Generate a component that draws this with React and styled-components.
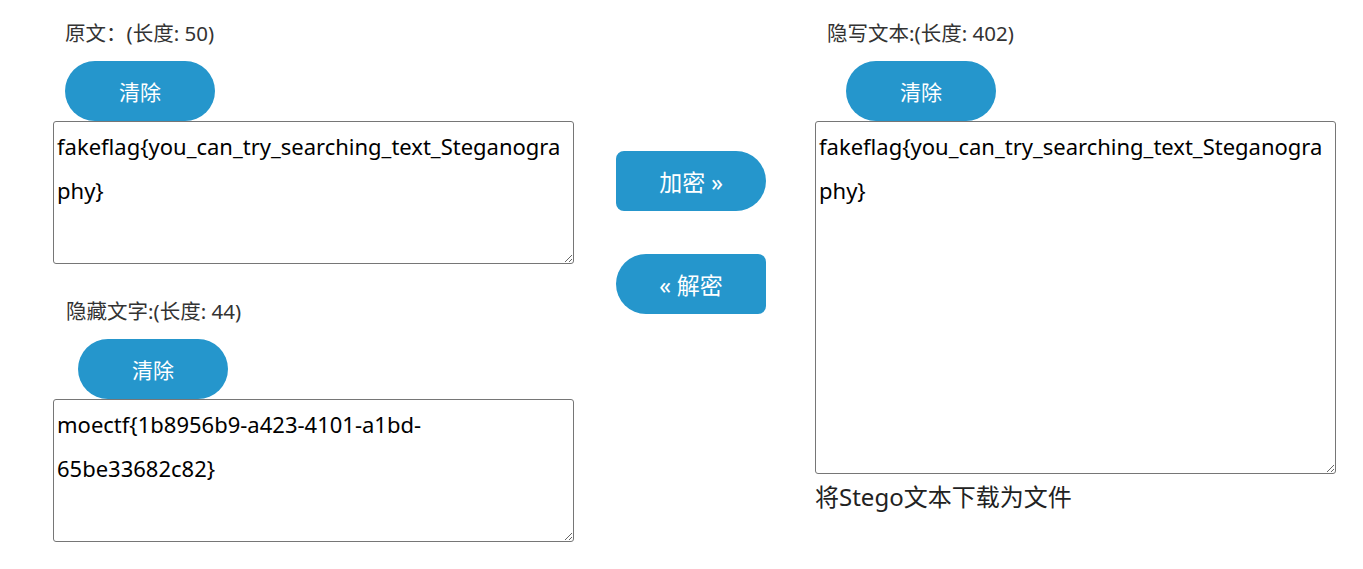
import styled, { createGlobalStyle } from "styled-components";

const GlobalStyle = createGlobalStyle`
    body {
        margin: 0;
        background: #fff;
        font-family: "Noto Sans", "Noto Sans CJK SC", sans-serif;
    }
`;

const Page = styled.div`
    display: flex;
    align-items: flex-start;
    padding: 20px 0 0 53px;
`;

const Column = styled.div`
    display: flex;
    flex-direction: column;
    width: 521px;
`;

const Middle = styled.div`
    display: flex;
    flex-direction: column;
    gap: 43px;
    width: 150px;
    margin: 0 49px 0 42px;
    padding-top: 131px;
`;

const Label = styled.div`
    height: 26px;
    line-height: 26px;
    padding-left: ${(p) => p.$indent || 12}px;
    margin-top: ${(p) => p.$top || 0}px;
    font-size: 20.5px;
    color: #333;
    white-space: nowrap;
`;

const ClearButton = styled.button`
    align-self: flex-start;
    width: 150px;
    height: 60px;
    margin: 15px 0 0 ${(p) => p.$offset}px;
    border: none;
    border-radius: 30px;
    background: #2596cc;
    color: #fff;
    font-family: inherit;
    font-size: 21px;
    cursor: pointer;
`;

const ActionButton = styled.button`
    width: 150px;
    height: 60px;
    border: none;
    border-radius: ${(p) => (p.$right ? "8px 30px 30px 8px" : "30px 8px 8px 30px")};
    background: #2596cc;
    color: #fff;
    font-family: inherit;
    font-size: 23px;
    cursor: pointer;
`;

const TextBox = styled.textarea`
    box-sizing: border-box;
    width: 521px;
    height: ${(p) => p.$height}px;
    padding: 2px 3px;
    border: 1px solid #767676;
    border-radius: 3px;
    font-family: inherit;
    font-size: 22px;
    line-height: 44px;
    color: #000;
`;

const Download = styled.a`
    margin-top: 8px;
    font-size: 24px;
    line-height: 30px;
    color: #222;
    text-decoration: none;
`;

const App = () => {
    return (
        <>
            <GlobalStyle />
            <Page>
                <Column>
                    <Label>原文：(长度: 50)</Label>
                    <ClearButton $offset={12}>清除</ClearButton>
                    <TextBox $height={143} defaultValue="fakeflag{you_can_try_searching_text_Steganography}" />
                    <Label $top={34} $indent={13}>隐藏文字:(长度: 44)</Label>
                    <ClearButton $offset={25}>清除</ClearButton>
                    <TextBox $height={143} defaultValue="moectf{1b8956b9-a423-4101-a1bd-65be33682c82}" />
                </Column>
                <Middle>
                    <ActionButton $right>加密 »</ActionButton>
                    <ActionButton>« 解密</ActionButton>
                </Middle>
                <Column>
                    <Label>隐写文本:(长度: 402)</Label>
                    <ClearButton $offset={31}>清除</ClearButton>
                    <TextBox $height={353} defaultValue="fakeflag{you_can_try_searching_text_Steganography}" />
                    <Download href="#">将Stego文本下载为文件</Download>
                </Column>
            </Page>
        </>
    );
};

export default App;
